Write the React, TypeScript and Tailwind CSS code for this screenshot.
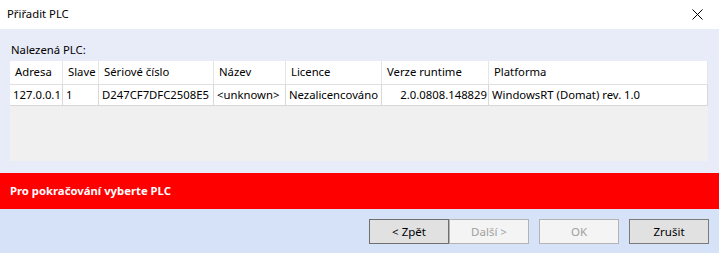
import React from 'react'

const cols = [
  { h: 'Adresa', v: '127.0.0.1', w: 53 },
  { h: 'Slave', v: '1', w: 36 },
  { h: 'Sériové číslo', v: 'D247CF7DFC2508E5', w: 115 },
  { h: 'Název', v: '<unknown>', w: 72 },
  { h: 'Licence', v: 'Nezalicencováno', w: 96 },
  { h: 'Verze runtime', v: '2.0.0808.148829', w: 107, right: true },
  { h: 'Platforma', v: 'WindowsRT (Domat) rev. 1.0', w: 219 },
]

const font = { fontFamily: '"Noto Sans", "Open Sans", sans-serif' }

export default function App() {
  return (
    <div className="w-[719px] h-[253px] flex flex-col text-[11.3px] text-black bg-white overflow-hidden" style={font}>
      {/* title bar */}
      <div className="h-[29px] flex items-center justify-between pl-[7px] pr-[16px] bg-white">
        <span>Přiřadit PLC</span>
        <svg width="11" height="11" viewBox="0 0 11 11" className="stroke-black">
          <path d="M0.5 0.5 L10.5 10.5 M10.5 0.5 L0.5 10.5" strokeWidth="1" />
        </svg>
      </div>

      {/* content */}
      <div className="h-[144px] bg-[#e8ebf8] px-[10px] pt-[9px] flex flex-col">
        <div className="h-[23px] leading-[23px] pl-[1px]">Nalezená PLC:</div>
        <div className="w-[698px] flex flex-col">
          <div className="flex h-[24px] bg-white border-b border-[#e0e0e0]">
            {cols.map((c) => (
              <div
                key={c.h}
                className="h-full flex items-center pl-[5px] border-r border-[#e5e5e5] whitespace-nowrap overflow-hidden"
                style={{ width: c.w }}
              >
                {c.h}
              </div>
            ))}
          </div>
          <div className="flex h-[21px] bg-white border-b border-[#d8d8d8]">
            {cols.map((c) => (
              <div
                key={c.h}
                className={`h-full flex items-center border-r border-[#d8d8d8] whitespace-nowrap overflow-hidden ${
                  c.right ? 'justify-end pr-[1px]' : 'pl-[3px]'
                }`}
                style={{ width: c.w }}
              >
                {c.v}
              </div>
            ))}
          </div>
          <div className="h-[55px] bg-[#f0f0f0]" />
        </div>
      </div>

      {/* status */}
      <div className="h-[36px] bg-[#ff0000] flex items-center pl-[10px] text-white font-bold">
        Pro pokračování vyberte PLC
      </div>

      {/* buttons */}
      <div className="flex-1 bg-[#d6e2f8] flex justify-end pr-[10px] pt-[10px]">
        <div className="flex items-start text-[11.5px]">
          <button className="w-[80px] h-[25px] bg-[#e1e1e1] border border-[#6f6f6f]">&lt; Zpět</button>
          <button className="w-[80px] h-[25px] bg-[#f4f4f4] border border-[#b4b4b4] text-[#a0a0a0]" disabled>
            Další &gt;
          </button>
          <button className="w-[80px] h-[25px] ml-[10px] bg-[#f4f4f4] border border-[#b4b4b4] text-[#a0a0a0]" disabled>
            OK
          </button>
          <button className="w-[80px] h-[25px] ml-[10px] bg-[#e1e1e1] border border-[#7a7a7a]">Zrušit</button>
        </div>
      </div>
    </div>
  )
}
